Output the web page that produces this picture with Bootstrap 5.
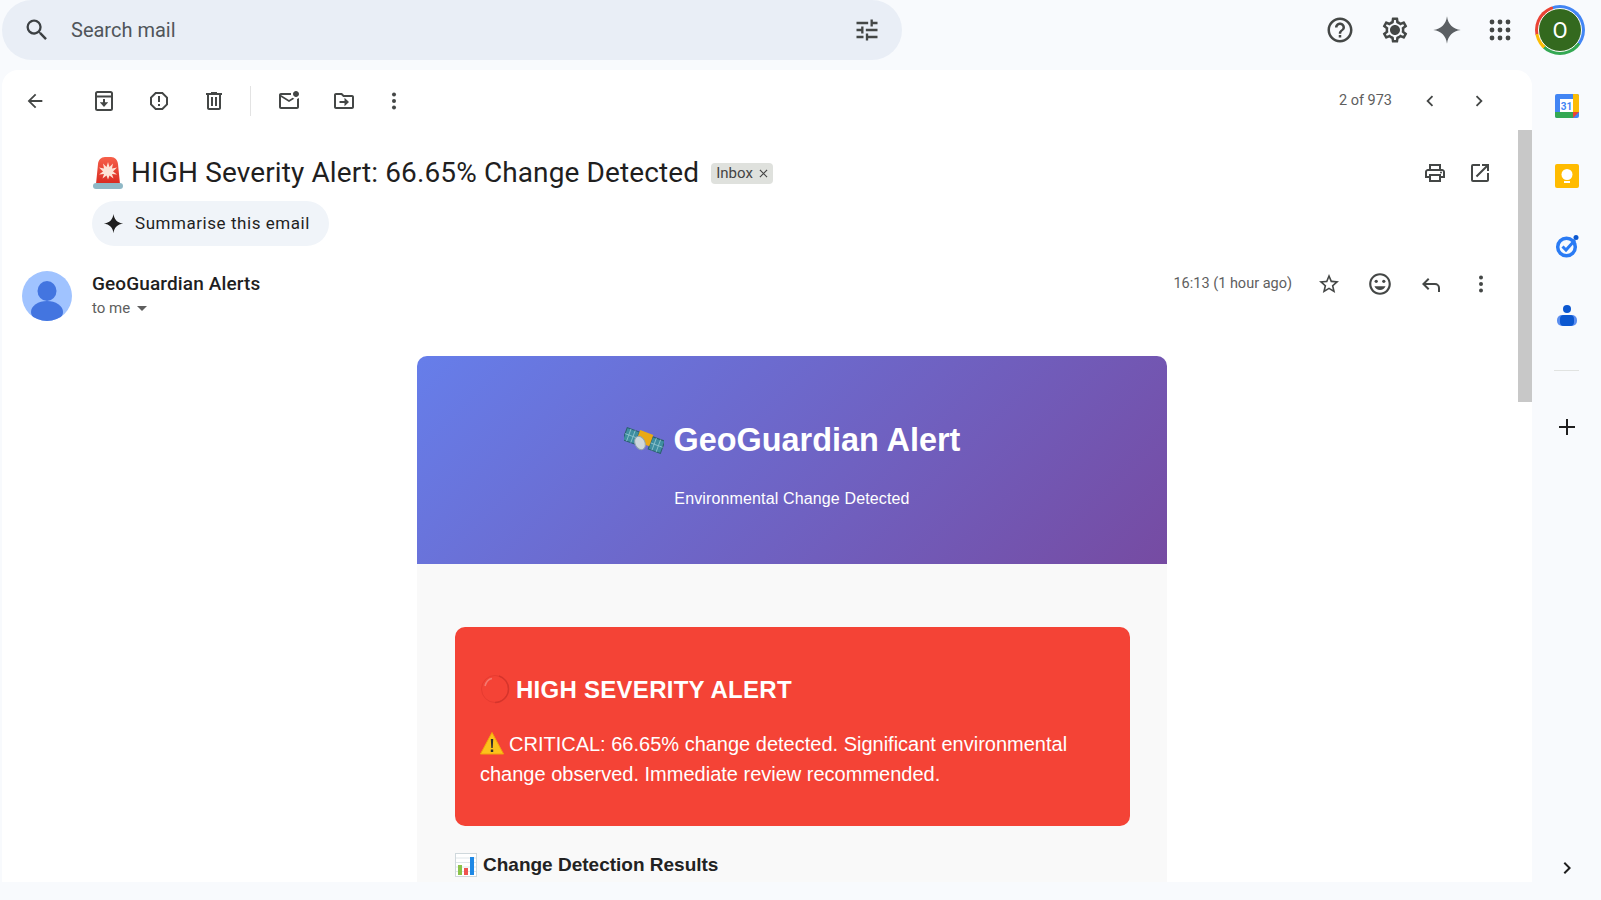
<!DOCTYPE html>
<html lang="en">
<head>
    <meta charset="UTF-8">
    <title>HIGH Severity Alert - Gmail</title>
    <link href="https://cdn.jsdelivr.net/npm/bootstrap@5.3.3/dist/css/bootstrap.min.css" rel="stylesheet">
    <style>
        html, body { height: 100%; overflow: hidden; }
        body { background-color: #f8fafd; font-family: Roboto, "Liberation Sans", sans-serif; color: #1f1f1f; }
        svg { display: block; flex: none; }

        .top-area { height: 70px; padding: 0 0 10px 2px; }
        .search-box { width: 900px; height: 60px; border-radius: 30px; background-color: #e9eef6; padding: 0 21px 0 21px; }
        .search-text { margin-left: 20px; font-size: 20px; color: #50555a; }
        .top-icons { margin-left: auto; }
        .gap-gear { margin-left: 25px; }
        .gap-spark { margin-left: 22px; }
        .gap-apps { margin-left: 26px; }
        .user-ring { width: 50px; height: 50px; border-radius: 50%; margin: 0 16px 0 23px; background: conic-gradient(#4285f4 0 35%, #34a853 35% 62%, #fbbc04 62% 72%, #ea4335 72% 95%, #4285f4 95%); }
        .user-face { width: 42px; height: 42px; border-radius: 50%; background-color: #33691e; color: #fff; font-size: 22px; border: 1px solid #fff; box-sizing: content-box; }

        .below-area { height: 812px; }
        .mail-panel { width: 1530px; margin-left: 2px; height: 812px; background-color: #fff; border-radius: 16px 16px 0 0; position: relative; overflow: hidden; }
        .fake-scroll { position: absolute; right: 0; top: 60px; width: 14px; height: 272px; background-color: #c8c8c8; }

        .tool-row { height: 60px; padding: 2px 33px 0 13px; }
        .tool-btn { width: 40px; height: 40px; }
        .tool-sep { width: 1px; height: 30px; background-color: #e3e3e3; }
        .ms-back { margin-left: 29px; }
        .ms-a { margin-left: 15px; }
        .ms-sep { margin-left: 16px; margin-right: 18px; }
        .ms-b { margin-left: 15px; }
        .ms-c { margin-left: 10px; }
        .page-count { margin-left: auto; font-size: 14.5px; color: #5e5e5e; margin-right: 18px; }
        .ms-chev { margin-left: 9px; }

        .subject-row { padding-left: 90px; padding-right: 40px; height: 42px; margin-top: 22px; }
        .subject-text { font-family: Roboto, sans-serif; font-size: 28px; font-weight: 400; letter-spacing: .12px; margin: 0 0 0 7px; color: #1f1f1f; white-space: nowrap; }
        .inbox-chip { margin-left: 12px; height: 21px; padding: 0 5px; border-radius: 4px; background-color: #dfe1dd; color: #444; font-size: 15px; gap: 6px; }
        .subject-tools { margin-left: auto; gap: 21px; }

        .sum-btn { margin: 7px 0 0 90px; width: 237px; height: 45px; border-radius: 22.5px; background-color: #f0f4f9; font-size: 17px; font-weight: 400; letter-spacing: .55px; padding-left: 11px; gap: 11px; border: 0; color: #1f1f1f; }

        .sender-row { margin-top: 25px; padding-left: 20px; padding-right: 39px; height: 50px; }
        .sender-name { font-size: 19px; font-weight: 500; letter-spacing: .12px; line-height: 22px; }
        .sender-to { font-size: 15px; color: #5e5e5e; line-height: 22px; margin-top: 2px; gap: 7px; }
        .sender-info { margin-left: 20px; }
        .sender-time { margin-left: auto; font-size: 14.5px; line-height: 21px; margin-top: 2px; color: #5e5e5e; margin-right: 25px; }
        .sender-tools { gap: 26px; }

        .mail-scroll { margin-left: 90px; width: 1400px; padding-top: 35px; }
        .alert-mail { width: 750px; font-family: "Liberation Sans", Arial, sans-serif; color: #222; }
        .mail-head { height: 208px; padding-top: 64px; border-radius: 10px 10px 0 0; color: #fff; text-align: center; background: linear-gradient(135deg, #667eea 0%, #764ba2 100%); }
        .mail-head h1 { font-size: 32.4px; font-weight: 700; line-height: 40px; margin: 0; gap: 10px; }
        .mail-head p { font-size: 16px; letter-spacing: .14px; line-height: 24px; margin: 27px 0 0; }
        .mail-body { background-color: #f9f9f9; padding: 63px 37px 30px 38px; }
        .red-box { height: 199px; background-color: #f44336; color: #fff; border-radius: 10px; padding: 47px 24px 0 25px; }
        .red-box h2 { font-size: 24px; letter-spacing: .27px; line-height: 29px; font-weight: 700; margin: 0 0 25px; gap: 6px; }
        .red-box p { font-size: 20px; line-height: 30px; margin: 0; }
        .red-box p svg { display: inline-block; vertical-align: -4px; margin-right: 5px; }
        .results-title { font-size: 19px; line-height: 26px; font-weight: 700; margin: 26px 0 0; gap: 6px; color: #222; }

        .side-rail { width: 69px; height: 812px; padding: 24px 0 0 0; gap: 46px; }
        .rail-line { width: 25px; height: 1px; background-color: #e1e3e1; margin-top: -4px; }
        .rail-plus { margin-top: -2px; }
        .rail-more { margin-top: auto; margin-bottom: 2px; }
    </style>
</head>
<body>
    <header class="top-area d-flex align-items-center">
        <div class="search-box d-flex align-items-center">
            <svg width="28" height="28" viewBox="0 0 24 24" fill="#3c4043"><path d="M15.5 14h-.79l-.28-.27A6.471 6.471 0 0 0 16 9.5 6.5 6.5 0 1 0 9.5 16c1.61 0 3.09-.59 4.23-1.57l.27.28v.79l5 4.99L20.49 19l-4.99-5zm-6 0C7.01 14 5 11.99 5 9.5S7.01 5 9.5 5 14 7.01 14 9.5 11.99 14 9.5 14z"/></svg>
            <span class="search-text">Search mail</span>
            <svg class="ms-auto" width="28" height="28" viewBox="0 0 24 24" fill="#444746"><path d="M3 17v2h6v-2H3zM3 5v2h10V5H3zm10 16v-2h8v-2h-8v-2h-2v6h2zM7 9v2H3v2h4v2h2V9H7zm14 4v-2H11v2h10zm-6-4h2V7h4V5h-4V3h-2v6z"/></svg>
        </div>
        <div class="top-icons d-flex align-items-center">
            <svg width="30" height="30" viewBox="0 0 24 24" fill="#444746"><path d="M11 18h2v-2h-2v2zm1-16C6.48 2 2 6.48 2 12s4.48 10 10 10 10-4.48 10-10S17.52 2 12 2zm0 18c-4.41 0-8-3.59-8-8s3.59-8 8-8 8 3.59 8 8-3.59 8-8 8zm0-14c-2.21 0-4 1.79-4 4h2c0-1.1.9-2 2-2s2 .9 2 2c0 2-3 1.75-3 5h2c0-2.25 3-2.5 3-5 0-2.21-1.79-4-4-4z"/></svg>
            <svg class="gap-gear" width="30" height="30" viewBox="0 0 24 24" fill="#444746"><path d="M19.43 12.98c.04-.32.07-.64.07-.98 0-.34-.03-.66-.07-.98l2.11-1.65c.19-.15.24-.42.12-.64l-2-3.46a.5.5 0 0 0-.61-.22l-2.49 1c-.52-.4-1.08-.73-1.69-.98l-.38-2.65A.488.488 0 0 0 14 2h-4c-.25 0-.46.18-.49.42l-.38 2.65c-.61.25-1.17.59-1.69.98l-2.49-1a.566.566 0 0 0-.18-.03c-.17 0-.34.09-.43.25l-2 3.46c-.13.22-.07.49.12.64l2.11 1.65c-.04.32-.07.65-.07.98 0 .33.03.66.07.98l-2.11 1.65c-.19.15-.24.42-.12.64l2 3.46a.5.5 0 0 0 .61.22l2.49-1c.52.4 1.08.73 1.69.98l.38 2.65c.03.24.24.42.49.42h4c.25 0 .46-.18.49-.42l.38-2.65c.61-.25 1.17-.59 1.69-.98l2.49 1c.06.02.12.03.18.03.17 0 .34-.09.43-.25l2-3.46c.12-.22.07-.49-.12-.64l-2.11-1.65zm-1.98-1.71c.04.31.05.52.05.73 0 .21-.02.43-.05.73l-.14 1.13.89.7 1.08.84-.7 1.21-1.27-.51-1.04-.42-.9.68c-.43.32-.84.56-1.25.73l-1.06.43-.16 1.13-.2 1.35h-1.4l-.19-1.35-.16-1.13-1.06-.43c-.43-.18-.83-.41-1.23-.71l-.91-.7-1.06.43-1.27.51-.7-1.21 1.08-.84.89-.7-.14-1.13c-.03-.31-.05-.54-.05-.74s.02-.43.05-.73l.14-1.13-.89-.7-1.08-.84.7-1.21 1.27.51 1.04.42.9-.68c.43-.32.84-.56 1.25-.73l1.06-.43.16-1.13.2-1.35h1.39l.19 1.35.16 1.13 1.06.43c.43.18.83.41 1.23.71l.91.7 1.06-.43 1.27-.51.7 1.21-1.07.85-.89.7.14 1.13zM12 8c-2.21 0-4 1.79-4 4s1.79 4 4 4 4-1.79 4-4-1.79-4-4-4z"/></svg>
            <svg class="gap-spark" width="30" height="30" viewBox="0 0 24 24" fill="#5b5f63"><path d="M12 1C12.9 7.5 16.5 11.1 23 12C16.5 12.9 12.9 16.5 12 23C11.1 16.5 7.5 12.9 1 12C7.5 11.1 11.1 7.5 12 1z"/></svg>
            <svg class="gap-apps" width="24" height="24" viewBox="0 0 24 24" fill="#444746"><circle cx="4" cy="4" r="2.4"/><circle cx="12" cy="4" r="2.4"/><circle cx="20" cy="4" r="2.4"/><circle cx="4" cy="12" r="2.4"/><circle cx="12" cy="12" r="2.4"/><circle cx="20" cy="12" r="2.4"/><circle cx="4" cy="20" r="2.4"/><circle cx="12" cy="20" r="2.4"/><circle cx="20" cy="20" r="2.4"/></svg>
            <div class="user-ring d-flex align-items-center justify-content-center">
                <div class="user-face d-flex align-items-center justify-content-center">O</div>
            </div>
        </div>
    </header>

    <div class="below-area d-flex">
        <main class="mail-panel">
            <div class="fake-scroll"></div>

            <div class="tool-row d-flex align-items-center">
                <div class="tool-btn d-flex align-items-center justify-content-center">
                    <svg width="22" height="22" viewBox="0 0 24 24" fill="#444746"><path d="M20 11H7.83l5.59-5.59L12 4l-8 8 8 8 1.41-1.41L7.83 13H20v-2z"/></svg>
                </div>
                <div class="tool-btn ms-back d-flex align-items-center justify-content-center">
                    <svg width="24" height="24" viewBox="0 0 24 24" fill="none" stroke="#444746" stroke-width="2"><rect x="4" y="3" width="16" height="18" rx="1.5"/><path d="M4 7.500h16"/><path d="M12 10v4"/><path d="M7.800 13.200 12 18l4.200-4.800z" fill="#444746" stroke="none"/></svg>
                </div>
                <div class="tool-btn ms-a d-flex align-items-center justify-content-center">
                    <svg width="24" height="24" viewBox="0 0 24 24" fill="#444746"><path d="M15.73 3H8.27L3 8.27v7.46L8.27 21h7.46L21 15.73V8.27L15.73 3zM19 14.9L14.9 19H9.1L5 14.9V9.1L9.1 5h5.8L19 9.1v5.8z"/><path d="M11 7h2v6h-2zm0 8h2v2h-2z"/></svg>
                </div>
                <div class="tool-btn ms-a d-flex align-items-center justify-content-center">
                    <svg width="24" height="24" viewBox="0 0 24 24" fill="#444746"><path d="M15 4V3H9v1H4v2h1v13c0 1.1.9 2 2 2h10c1.1 0 2-.9 2-2V6h1V4h-5zm2 15H7V6h10v13zM9 8h2v9H9zm4 0h2v9h-2z"/></svg>
                </div>
                <div class="tool-sep ms-sep"></div>
                <div class="tool-btn d-flex align-items-center justify-content-center">
                    <svg width="24" height="24" viewBox="0 0 24 24" fill="#444746"><path d="M22 8.98V18c0 1.1-.9 2-2 2H4c-1.1 0-2-.9-2-2V6c0-1.1.9-2 2-2h10.1c-.06.32-.1.66-.1 1 0 .34.04.68.1 1H4l8 5 3.67-2.29c.47.43 1.02.76 1.63.98L12 13 4 8v10h16V9.9c.74-.15 1.42-.48 2-.92zM16 5c0 1.66 1.34 3 3 3s3-1.34 3-3-1.34-3-3-3-3 1.34-3 3z"/></svg>
                </div>
                <div class="tool-btn ms-b d-flex align-items-center justify-content-center">
                    <svg width="24" height="24" viewBox="0 0 24 24" fill="#444746"><path d="M20 6h-8l-2-2H4c-1.1 0-1.99.9-1.99 2L2 18c0 1.1.9 2 2 2h16c1.1 0 2-.9 2-2V8c0-1.1-.9-2-2-2zm0 12H4V6h5.17l2 2H20v10z"/><path d="M7.500 12h5V8.800l4.500 4.200-4.500 4.200V14h-5z"/></svg>
                </div>
                <div class="tool-btn ms-c d-flex align-items-center justify-content-center">
                    <svg width="24" height="24" viewBox="0 0 24 24" fill="#444746"><circle cx="12" cy="5.500" r="2"/><circle cx="12" cy="12" r="2"/><circle cx="12" cy="18.500" r="2"/></svg>
                </div>
                <span class="page-count">2 of 973</span>
                <div class="tool-btn d-flex align-items-center justify-content-center">
                    <svg width="22" height="22" viewBox="0 0 24 24" fill="#444746"><path d="M15.41 7.41 14 6l-6 6 6 6 1.41-1.41L10.83 12z"/></svg>
                </div>
                <div class="tool-btn ms-chev d-flex align-items-center justify-content-center">
                    <svg width="22" height="22" viewBox="0 0 24 24" fill="#444746"><path d="M10 6 8.590 7.410 13.170 12l-4.580 4.590L10 18l6-6z"/></svg>
                </div>
            </div>

            <div class="subject-row d-flex align-items-center">
                <svg width="32" height="34" viewBox="0 0 32 34"><defs><linearGradient id="sirenDome" x1="0" y1="0" x2="0" y2="1"><stop offset="0" stop-color="#f6604a"/><stop offset="1" stop-color="#d92a20"/></linearGradient></defs><path d="M4 28 6 8c.4-4 3-7 7-7h6c4 0 6.600 3 7 7l2 20z" fill="url(#sirenDome)"/><path d="M16 6l1.500 5L21 7.500l-1 5 5-1-4 4 4 3-5-.5 1.500 4.500-4-3-1.500 4-1.500-4-4 3 1.500-4.500-5 .5 4-3-4-4 5 1-1-5 3.500 3.500z" fill="#fde3d6"/><rect x="1" y="27" width="30" height="6" rx="3" fill="#8fb8c6"/></svg>
                <h1 class="subject-text">HIGH Severity Alert: 66.65% Change Detected</h1>
                <span class="inbox-chip d-flex align-items-center">Inbox
                    <svg width="9" height="9" viewBox="0 0 10 10" stroke="#444" stroke-width="1.300"><path d="M1 1l8 8M9 1l-8 8"/></svg>
                </span>
                <div class="subject-tools d-flex align-items-center">
                    <svg width="24" height="24" viewBox="0 0 24 24" fill="#444746"><path d="M19 8h-1V3H6v5H5c-1.660 0-3 1.340-3 3v6h4v4h12v-4h4v-6c0-1.660-1.340-3-3-3zM8 5h8v3H8V5zm8 12v2H8v-4h8v2zm2-2v-2H6v2H4v-4c0-.55.45-1 1-1h14c.55 0 1 .45 1 1v4h-2z"/><circle cx="18" cy="11.500" r="1"/></svg>
                    <svg width="24" height="24" viewBox="0 0 24 24" fill="#444746"><path d="M19 19H5V5h7V3H5a2 2 0 0 0-2 2v14a2 2 0 0 0 2 2h14c1.100 0 2-.9 2-2v-7h-2v7zM14 3v2h3.590l-9.830 9.830 1.410 1.410L19 6.410V10h2V3h-7z"/></svg>
                </div>
            </div>

            <button class="sum-btn d-flex align-items-center" type="button">
                <svg width="21" height="21" viewBox="0 0 24 24" fill="#1f1f1f"><path d="M12 1C12.900 7.500 16.500 11.100 23 12C16.500 12.900 12.900 16.500 12 23C11.100 16.500 7.500 12.900 1 12C7.500 11.100 11.100 7.500 12 1z"/></svg>
                Summarise this email
            </button>

            <div class="sender-row d-flex align-items-center">
                <svg width="50" height="50" viewBox="0 0 50 50"><defs><clipPath id="faceClip"><circle cx="25" cy="25" r="25"/></clipPath></defs><circle cx="25" cy="25" r="25" fill="#a0c3ff"/><g clip-path="url(#faceClip)"><ellipse cx="25" cy="20" rx="9.500" ry="10" fill="#4375e0"/><ellipse cx="25" cy="41" rx="16" ry="11" fill="#4375e0"/></g></svg>
                <div class="sender-info">
                    <div class="sender-name">GeoGuardian Alerts</div>
                    <div class="sender-to d-flex align-items-center">to me
                        <svg width="10" height="5" viewBox="0 0 10 5" fill="#5e5e5e"><path d="M0 0h10L5 5z"/></svg>
                    </div>
                </div>
                <span class="sender-time align-self-start">16:13 (1 hour ago)</span>
                <div class="sender-tools d-flex align-items-center align-self-start">
                    <svg width="24" height="24" viewBox="0 0 24 24" fill="#444746"><path d="M22 9.240l-7.190-.62L12 2 9.190 8.630 2 9.240l5.460 4.730L5.820 21 12 17.270 18.180 21l-1.630-7.030L22 9.240zM12 15.400l-3.760 2.270 1-4.280-3.320-2.880 4.380-.38L12 6.100l1.710 4.040 4.380.38-3.320 2.880 1 4.280L12 15.400z"/></svg>
                    <svg width="26" height="26" viewBox="0 0 24 24" fill="#444746"><path d="M11.990 2C6.470 2 2 6.480 2 12s4.470 10 9.990 10C17.520 22 22 17.520 22 12S17.520 2 11.990 2zM12 20c-4.420 0-8-3.580-8-8s3.580-8 8-8 8 3.580 8 8-3.580 8-8 8z"/><circle cx="15.500" cy="9.500" r="1.500"/><circle cx="8.500" cy="9.500" r="1.500"/><path d="M12 17.500c2.330 0 4.310-1.460 5.110-3.500H6.890c.8 2.040 2.780 3.500 5.110 3.500z"/></svg>
                    <svg width="24" height="24" viewBox="0 0 24 24" fill="#444746"><path d="M21 20h-2v-4a3 3 0 0 0-3-3H6.830l3.580 3.590L9 18l-6-6 6-6 1.410 1.410L6.830 11H16a5 5 0 0 1 5 5v4z"/></svg>
                    <svg width="24" height="24" viewBox="0 0 24 24" fill="#444746"><circle cx="12" cy="5.500" r="2"/><circle cx="12" cy="12" r="2"/><circle cx="12" cy="18.500" r="2"/></svg>
                </div>
            </div>

            <div class="mail-scroll">
                <div class="alert-mail mx-auto">
                    <div class="mail-head">
                        <h1 class="d-flex align-items-center justify-content-center">
                            <svg width="40" height="28" viewBox="0 0 40 28"><g transform="rotate(20 20 14)"><rect x="0" y="8" width="13" height="13" fill="#3f8ea0" stroke="#2b5f6e"/><path d="M4 8v13M8.500 8v13M0 14.500h13" stroke="#8fc4cf" stroke-width=".8"/><rect x="27" y="8" width="13" height="13" fill="#3f8ea0" stroke="#2b5f6e"/><path d="M31 8v13M35.500 8v13M27 14.500h13" stroke="#8fc4cf" stroke-width=".8"/><rect x="13" y="6" width="14" height="12" fill="#e9a916"/></g><ellipse cx="16" cy="17" rx="5" ry="7" fill="#cfd8dc" stroke="#90a4ae" transform="rotate(-25 16 17)"/></svg>
                            <span>GeoGuardian Alert</span>
                        </h1>
                        <p>Environmental Change Detected</p>
                    </div>
                    <div class="mail-body">
                        <div class="red-box">
                            <h2 class="d-flex align-items-center">
                                <svg width="30" height="30" viewBox="0 0 30 30"><circle cx="15" cy="15" r="13.500" fill="#f44336" stroke="#e63c31"/><path d="M15 28.500a13.500 13.500 0 0 0 13.500-13.500A13.500 13.500 0 0 0 19 2" fill="none" stroke="#d5352c" stroke-width="1.500"/><path d="M5 12C6 8 9 5 12 4.500" fill="none" stroke="#f47a70" stroke-width="1.500"/></svg>
                                <span>HIGH SEVERITY ALERT</span>
                            </h2>
                            <p><svg width="24" height="24" viewBox="0 0 24 24"><path d="M12 1.500 23.500 23H.5z" fill="#fcc21b" stroke="#f2a50c" stroke-linejoin="round"/><path d="M10.800 8h2.400l-.5 9h-1.400zM10.800 18.500h2.400V21h-2.400z" fill="#2f2f2f"/></svg>CRITICAL: 66.65% change detected. Significant environmental change observed. Immediate review recommended.</p>
                        </div>
                        <h3 class="results-title d-flex align-items-center">
                            <svg width="22" height="24" viewBox="0 0 22 24"><rect x=".5" y=".5" width="21" height="23" fill="#fff" stroke="#cfd8dc"/><path d="M1 5h20M1 9.500h20M1 14h20M1 18.500h20" stroke="#dfe6e9"/><rect x="3" y="12" width="4" height="10" fill="#8bc34a"/><rect x="9" y="15" width="4" height="7" fill="#ef5350"/><rect x="15" y="4" width="4" height="18" fill="#1e88e5"/></svg>
                            <span>Change Detection Results</span>
                        </h3>
                    </div>
                </div>
            </div>
        </main>

        <aside class="side-rail d-flex flex-column align-items-center">
            <svg width="24" height="24" viewBox="0 0 24 24"><rect x="0" y="0" width="24" height="24" rx="2" fill="#4285f4"/><path d="M18 0h4a2 2 0 0 1 2 2v16h-6z" fill="#fbbc04"/><path d="M0 18h18v6H2a2 2 0 0 1-2-2z" fill="#34a853"/><path d="M18 18h6l-6 6z" fill="#ea4335"/><rect x="5" y="5" width="13" height="13" fill="#fff"/><text x="11.500" y="15.500" text-anchor="middle" font-family="Roboto, sans-serif" font-size="10" font-weight="700" fill="#4285f4">31</text></svg>
            <svg width="24" height="24" viewBox="0 0 24 24"><rect width="24" height="24" rx="2" fill="#ffbb00"/><circle cx="12" cy="10.500" r="5.500" fill="#fff"/><rect x="9" y="17" width="6" height="2" fill="#fff"/></svg>
            <svg width="24" height="24" viewBox="0 0 24 24"><circle cx="11.500" cy="13" r="8.800" fill="none" stroke="#2a7bf4" stroke-width="3.500"/><path d="M7.500 12.500 11 16 20 6" fill="none" stroke="#2a7bf4" stroke-width="3"/><circle cx="21" cy="3.500" r="2.500" fill="#0b57d0"/></svg>
            <svg width="24" height="24" viewBox="0 0 24 24"><circle cx="12" cy="5" r="4" fill="#0b57d0"/><rect x="2" y="11" width="20" height="11" rx="5" fill="#5b8ef0"/><rect x="5" y="11" width="14" height="11" rx="4" fill="#0b57d0"/></svg>
            <div class="rail-line"></div>
            <svg class="rail-plus" width="24" height="24" viewBox="0 0 24 24" fill="#1f1f1f"><path d="M11 4h2v7h7v2h-7v7h-2v-7H4v-2h7z"/></svg>
            <svg class="rail-more" width="24" height="24" viewBox="0 0 24 24" fill="#1f1f1f"><path d="M10 6 8.590 7.410 13.170 12l-4.580 4.590L10 18l6-6z"/></svg>
        </aside>
    </div>
    <script src="https://cdn.jsdelivr.net/npm/bootstrap@5.3.3/dist/js/bootstrap.bundle.min.js"></script>
</body>
</html>
